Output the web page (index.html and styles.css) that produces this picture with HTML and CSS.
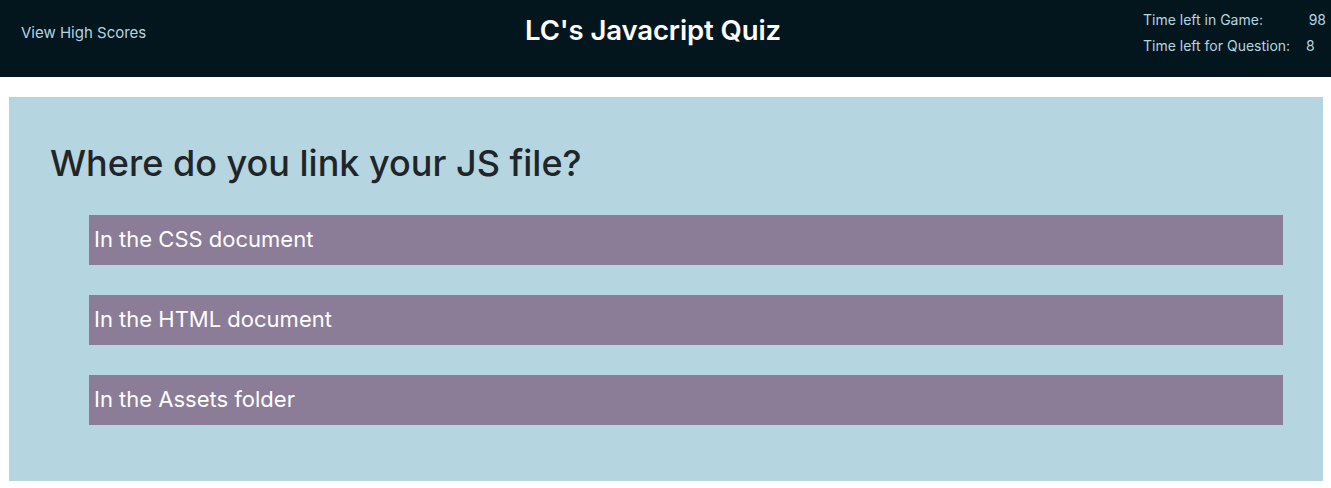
FILE: index.html
```html
<!DOCTYPE html>
<html>
<head>
<meta charset="utf-8">
<link rel="stylesheet" href="styles.css">
</head>
<body>
<header class="topbar">
  <a class="scores-link" href="#">View High Scores</a>
  <h1 class="site-title">LC's Javacript Quiz</h1>
  <div class="timers">
    <div class="timer-row"><span class="timer-label">Time left in Game:</span><span class="timer-value">98</span></div>
    <div class="timer-row"><span class="timer-label">Time left for Question:</span><span class="timer-value">8</span></div>
  </div>
</header>
<main class="quiz-card">
  <h2 class="question">Where do you link your JS file?</h2>
  <div class="answers">
    <button class="answer">In the CSS document</button>
    <button class="answer">In the HTML document</button>
    <button class="answer">In the Assets folder</button>
  </div>
</main>
</body>
</html>
```
FILE: styles.css
```css
* { box-sizing: border-box; }
html, body { margin: 0; padding: 0; }
body {
  font-family: Inter, "Liberation Sans", sans-serif;
  background: #ffffff;
  color: #212529;
}
.topbar {
  height: 77px;
  background: #03151d;
  display: flex;
  align-items: center;
  padding: 0 5px 0 21px;
}
.scores-link {
  color: #b5d6e0;
  text-decoration: none;
  font-size: 15px;
  width: 504px;
  margin-top: -12px;
}
.site-title {
  margin: 0;
  color: #ffffff;
  font-size: 27.5px;
  font-weight: 600;
  letter-spacing: -0.1px;
  flex: 1;
  margin-top: -18px;
}
.timers {
  display: flex;
  flex-direction: column;
  gap: 6px;
  margin-top: -12px;
}
.timer-row {
  display: flex;
  color: #b5d6e0;
  font-size: 14px;
  line-height: 20px;
}
.timer-label { width: 163px; }
.timer-value { width: 20px; text-align: left; }
.timer-row:first-child .timer-value { text-align: right; }

.quiz-card {
  margin: 20px 8px 0 9px;
  background: #b5d6e0;
  height: 384px;
  padding: 42px 40px 0 41px;
}
.question {
  margin: 0 0 28px 0;
  font-size: 36px;
  font-weight: 500;
  line-height: 48px;
  color: #212529;
}
.answers {
  display: flex;
  flex-direction: column;
  gap: 30px;
  padding-left: 39px;
}
.answer {
  height: 50px;
  border: none;
  background: #8b7d98;
  color: #ffffff;
  font-family: inherit;
  font-size: 22px;
  line-height: 48px;
  text-align: left;
  padding: 0 5px 2px;
  cursor: pointer;
}
```
